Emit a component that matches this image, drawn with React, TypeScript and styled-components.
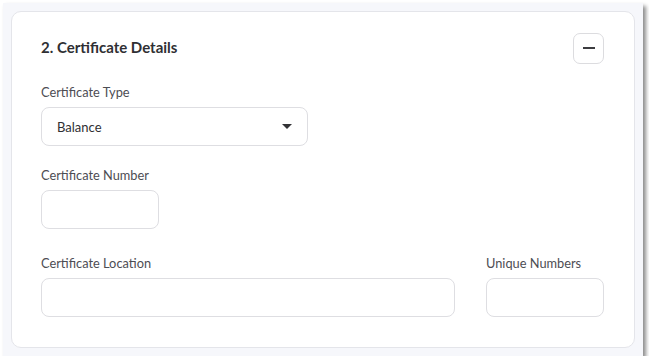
import React from "react";
import styled, { createGlobalStyle } from "styled-components";

const GlobalStyle = createGlobalStyle`
  html, body {
    margin: 0;
    padding: 0;
    background: #ffffff;
    font-family: Lato, "Liberation Sans", sans-serif;
  }
`;

const Frame = styled.div`
  margin: 3px 0 0 3px;
  width: 640px;
  height: 353px;
  box-sizing: border-box;
  padding: 8px;
  background: #f6f7fb;
  box-shadow: 3px 3px 4px rgba(0, 0, 0, 0.45);
`;

const Card = styled.section`
  box-sizing: border-box;
  width: 624px;
  height: 337px;
  background: #ffffff;
  border: 1px solid #e4e5ea;
  border-radius: 10px;
  padding: 20px 30px 0 29px;
  display: flex;
  flex-direction: column;
`;

const Header = styled.div`
  display: flex;
  align-items: center;
  justify-content: space-between;
  height: 32px;
`;

const Title = styled.h2`
  margin: 0 0 2px 0;
  font-size: 15px;
  font-weight: 700;
  color: #2f2f33;
`;

const CollapseButton = styled.button`
  width: 31px;
  height: 31px;
  box-sizing: border-box;
  border: 1px solid #dcdcdf;
  border-radius: 7px;
  background: #ffffff;
  display: flex;
  align-items: center;
  justify-content: center;
  padding: 0;

  &::before {
    content: "";
    width: 12px;
    height: 2px;
    background: #3c3c40;
  }
`;

const Field = styled.div<{ $grow?: boolean; $top: number }>`
  display: flex;
  flex-direction: column;
  margin-top: ${(p) => p.$top}px;
  flex: ${(p) => (p.$grow ? "1" : "none")};
`;

const Label = styled.label`
  font-size: 12.8px;
  color: #4d4d53;
  line-height: 16px;
  margin-bottom: 7px;
`;

const Box = styled.div<{ $width?: number }>`
  box-sizing: border-box;
  height: 39px;
  width: ${(p) => (p.$width ? `${p.$width}px` : "100%")};
  border: 1px solid #dedee2;
  border-radius: 8px;
  background: #ffffff;
  display: flex;
  align-items: center;
  justify-content: space-between;
  padding: 0 15px 0 15px;
  font-size: 13px;
  color: #2f2f33;
`;

const Caret = styled.span`
  width: 0;
  height: 0;
  border-left: 5px solid transparent;
  border-right: 5px solid transparent;
  border-top: 5px solid #333336;
`;

const Row = styled.div`
  display: flex;
  gap: 31px;
`;

export default function App() {
  return (
    <>
      <GlobalStyle />
      <Frame>
        <Card>
          <Header>
            <Title>2. Certificate Details</Title>
            <CollapseButton aria-label="Collapse" />
          </Header>

          <Field $top={20}>
            <Label>Certificate Type</Label>
            <Box $width={267}>
              <span>Balance</span>
              <Caret />
            </Box>
          </Field>

          <Field $top={21}>
            <Label>Certificate Number</Label>
            <Box $width={118} />
          </Field>

          <Row>
            <Field $top={26} $grow>
              <Label>Certificate Location</Label>
              <Box />
            </Field>
            <Field $top={26}>
              <Label>Unique Numbers</Label>
              <Box $width={118} />
            </Field>
          </Row>
        </Card>
      </Frame>
    </>
  );
}
